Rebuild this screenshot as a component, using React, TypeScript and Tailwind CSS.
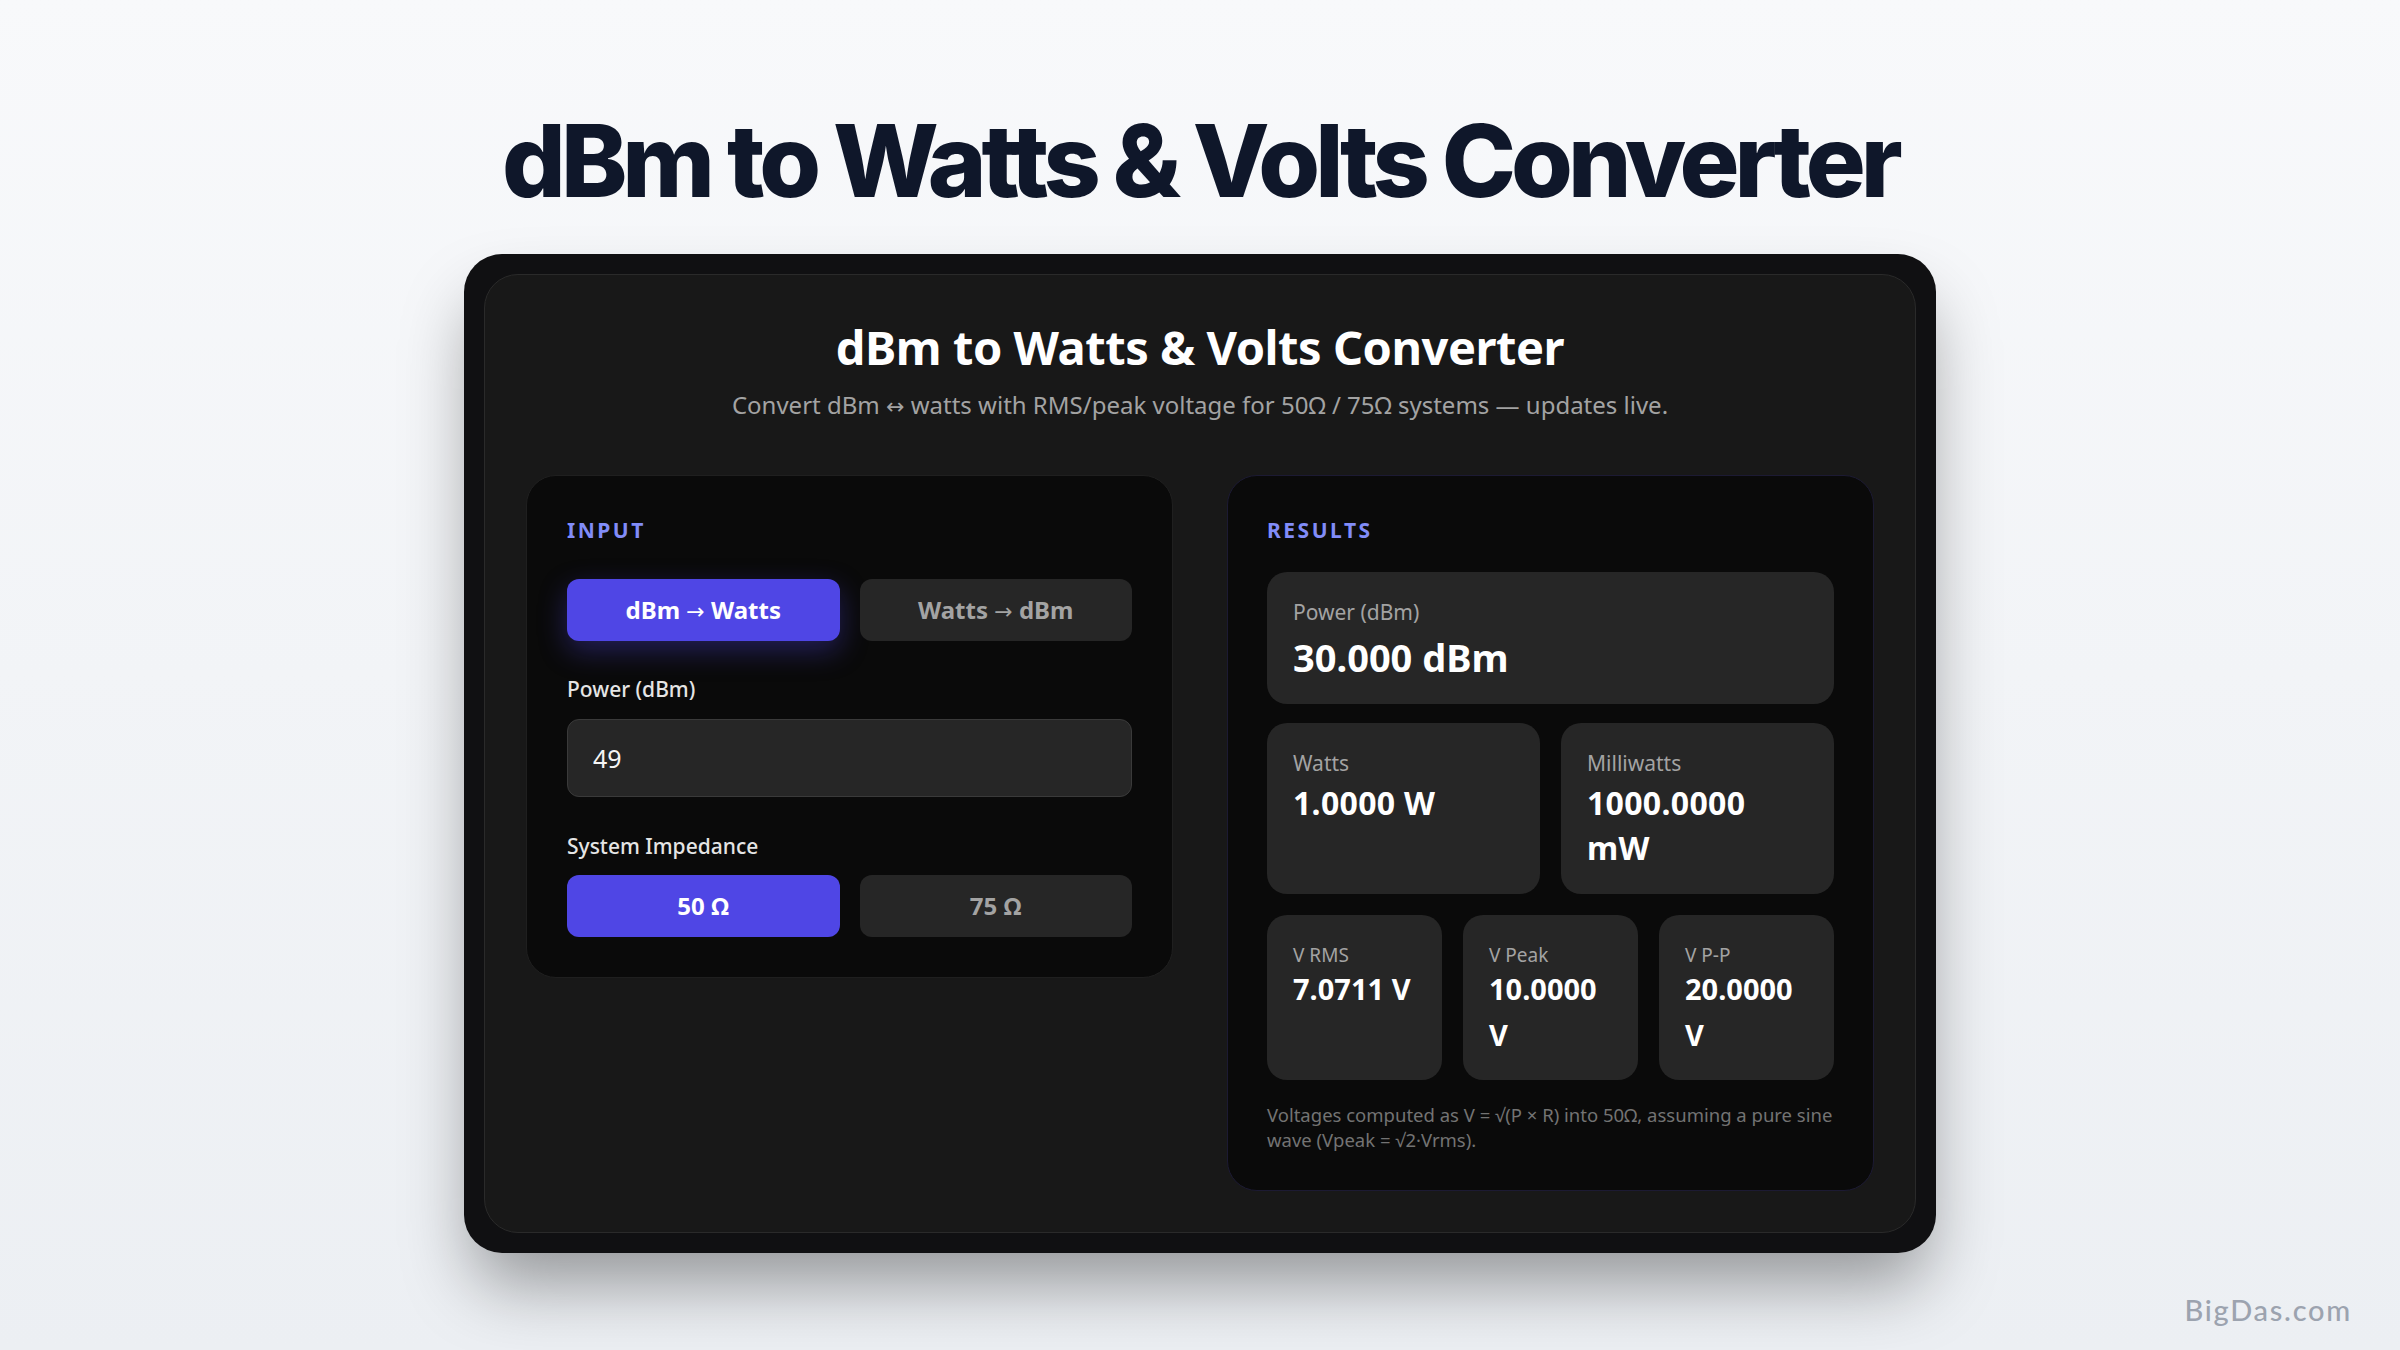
import React, { useState } from 'react';

const uiFont = { fontFamily: '"Noto Sans", "Open Sans", sans-serif' };
const arrowFont = { fontFamily: '"DejaVu Sans", sans-serif' };

type Mode = 'dbm' | 'watts';

function Toggle({
  active,
  glow,
  children,
  onClick,
}: {
  active: boolean;
  glow?: boolean;
  children: React.ReactNode;
  onClick: () => void;
}) {
  return (
    <button
      onClick={onClick}
      className={`flex-1 h-[62px] rounded-[12px] text-[24px] font-bold ${
        active ? 'bg-[#4f46e5] text-white' : 'bg-[#262626] text-[#a3a3a3]'
      } ${active && glow ? 'shadow-[0_10px_28px_rgba(79,70,229,0.35)]' : ''}`}
    >
      {children}
    </button>
  );
}

function Stat({
  label,
  value,
  size,
}: {
  label: string;
  value: string;
  size: 'lg' | 'md' | 'sm';
}) {
  return (
    <div
      className={`rounded-[20px] bg-[#262626] ${
        size === 'sm' ? 'px-[26px] pt-[29px] pb-[22px]' : 'px-[26px] pt-[25px] pb-[24px]'
      }`}
    >
      <div
        className={`text-[#a3a3a3] ${
          size === 'sm' ? 'text-[19px] leading-[22px]' : 'text-[21px] leading-[30px]'
        }`}
      >
        {label}
      </div>
      <div
        className={`font-bold text-white ${
          size === 'lg'
            ? 'mt-[7px] text-[38px] leading-[46px]'
            : size === 'md'
            ? 'mt-[2px] text-[32px] leading-[45px] tracking-[0.01em]'
            : 'text-[29px] leading-[46px]'
        }`}
      >
        {value}
      </div>
    </div>
  );
}

export default function App() {
  const [mode, setMode] = useState<Mode>('dbm');
  const [ohms, setOhms] = useState<50 | 75>(50);

  return (
    <div className="relative h-screen w-full overflow-hidden bg-gradient-to-b from-[#f8f9fb] to-[#eceff3]">
      <div className="flex flex-col items-center pt-[111px]">
        {/* Page title */}
        <h1
          className="text-[100px] leading-[100px] font-extrabold tracking-[-0.05em] text-[#0f172a]"
          style={{ fontFamily: 'Inter, "Noto Sans", sans-serif' }}
        >
          dBm to Watts &amp; Volts Converter
        </h1>

        {/* Device frame */}
        <div className="mt-[43px] w-[1472px] rounded-[38px] bg-[#101012] p-[20px] shadow-[0_40px_70px_-10px_rgba(0,0,0,0.38)]">
          <div
            className="rounded-[34px] border border-[#2a2a2a] bg-[#181818] px-[41px] pt-[43px] pb-[41px]"
            style={uiFont}
          >
            <div className="text-center">
              <h2 className="text-[47px] leading-[58px] font-bold text-white tracking-[-0.01em]">
                dBm to Watts &amp; Volts Converter
              </h2>
              <p className="mt-[13px] text-[24px] leading-[32px] text-[#a3a3a3]">
                Convert dBm <span style={arrowFont} className="text-[22px]">↔</span> watts with RMS/peak voltage for
                50Ω / 75Ω systems — updates live.
              </p>
            </div>

            <div className="mt-[52px] grid grid-cols-2 items-start gap-[54px]">
              {/* Input */}
              <div className="rounded-[30px] border border-[#1f1f1f] bg-[#0a0a0a] p-[40px]">
                <div className="text-[21px] leading-[28px] font-bold tracking-[0.12em] text-[#818cf8]">
                  INPUT
                </div>
                <div className="mt-[35px] flex gap-[20px]">
                  <Toggle active={mode === 'dbm'} glow onClick={() => setMode('dbm')}>
                    dBm <span style={arrowFont} className="text-[22px] font-normal">→</span> Watts
                  </Toggle>
                  <Toggle active={mode === 'watts'} glow onClick={() => setMode('watts')}>
                    Watts <span style={arrowFont} className="text-[22px] font-normal">→</span> dBm
                  </Toggle>
                </div>

                <label className="mt-[33px] block text-[21px] leading-[30px] font-medium text-[#e5e5e5]">
                  Power (dBm)
                </label>
                <input
                  defaultValue="49"
                  className="mt-[15px] block h-[78px] w-full rounded-[12px] border border-[#3a3a3a] bg-[#262626] px-[25px] text-[25px] text-[#f5f5f5] outline-none"
                  style={uiFont}
                />

                <div className="mt-[34px] text-[21px] leading-[30px] font-medium text-[#e5e5e5]">
                  System Impedance
                </div>
                <div className="mt-[14px] flex gap-[20px]">
                  <Toggle active={ohms === 50} onClick={() => setOhms(50)}>
                    50 Ω
                  </Toggle>
                  <Toggle active={ohms === 75} onClick={() => setOhms(75)}>
                    75 Ω
                  </Toggle>
                </div>
              </div>

              {/* Results */}
              <div className="rounded-[30px] border border-[#1c1a33] bg-[#0a0a0a] px-[39px] pt-[40px] pb-[38px]">
                <div className="text-[21px] leading-[28px] font-bold tracking-[0.12em] text-[#818cf8]">
                  RESULTS
                </div>
                <div className="mt-[28px]">
                  <Stat size="lg" label="Power (dBm)" value="30.000 dBm" />
                </div>
                <div className="mt-[19px] grid grid-cols-2 gap-[21px]">
                  <Stat size="md" label="Watts" value="1.0000 W" />
                  <Stat size="md" label="Milliwatts" value="1000.0000 mW" />
                </div>
                <div className="mt-[21px] grid grid-cols-3 gap-[21px]">
                  <Stat size="sm" label="V RMS" value="7.0711 V" />
                  <Stat size="sm" label="V Peak" value="10.0000 V" />
                  <Stat size="sm" label="V P-P" value="20.0000 V" />
                </div>
                <p className="mt-[22px] text-[18.5px] leading-[25px] text-[#737373]">
                  Voltages computed as V = √(P × R) into 50Ω, assuming a pure sine wave (Vpeak = √2·Vrms).
                </p>
              </div>
            </div>
          </div>
        </div>
      </div>

      {/* Watermark */}
      <div
        className="absolute right-[48px] bottom-[19px] text-[29px] font-medium tracking-[0.06em] text-[#9ca3af]"
        style={{ fontFamily: 'Lato, "Noto Sans", sans-serif' }}
      >
        BigDas.com
      </div>
    </div>
  );
}
